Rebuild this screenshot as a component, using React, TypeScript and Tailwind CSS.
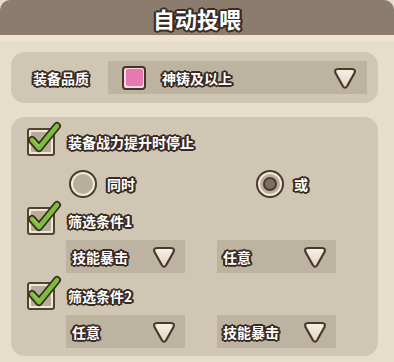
import React from 'react';

const outline =
  "text-white font-bold [font-family:'Noto_Sans_CJK_SC',sans-serif] [text-shadow:-2px_0_0_#3b2a21,2px_0_0_#3b2a21,0_-2px_0_#3b2a21,0_2px_0_#3b2a21,-1px_-1px_0_#3b2a21,1px_-1px_0_#3b2a21,-1px_1px_0_#3b2a21,1px_1px_0_#3b2a21,-2px_-1px_0_#3b2a21,2px_1px_0_#3b2a21,-2px_1px_0_#3b2a21,2px_-1px_0_#3b2a21]";

const Triangle = () => (
  <svg width="24" height="24" viewBox="0 0 24 24">
    <defs>
      <linearGradient id="tri" x1="0" y1="0" x2="0" y2="1">
        <stop offset="0" stopColor="#f7f1e8" />
        <stop offset="1" stopColor="#e0d5c4" />
      </linearGradient>
    </defs>
    <path
      d="M5 3 L19 3 Q23 3 21.5 7 L14.2 20 Q12 23.5 9.8 20 L2.5 7 Q1 3 5 3 Z"
      fill="url(#tri)"
      stroke="#4a382b"
      strokeWidth="2.2"
      strokeLinejoin="round"
    />
  </svg>
);

const Checkbox = () => (
  <div className="relative w-[28px] h-[28px] shrink-0">
    <div className="w-[28px] h-[28px] rounded-[3px] border-2 border-[#54412f] bg-[#efe7d8] p-[2px]">
      <div className="w-full h-full bg-[#b7ad9b] rounded-[1px]" />
    </div>
    <svg className="absolute -left-[1px] -top-[8px]" width="36" height="36" viewBox="0 0 36 36">
      <path d="M6 20 L13 28 L31 6" fill="none" stroke="#3d2c20" strokeWidth="8" strokeLinecap="round" strokeLinejoin="round" />
      <path d="M6 20 L13 28 L31 6" fill="none" stroke="#7cbd3c" strokeWidth="4.5" strokeLinecap="round" strokeLinejoin="round" />
      <path d="M8 20.5 L13 26" fill="none" stroke="#9ed25a" strokeWidth="1.2" strokeLinecap="round" />
    </svg>
  </div>
);

const Radio = ({ checked }: { checked?: boolean }) => (
  <div className="w-[28px] h-[28px] rounded-full border-2 border-[#4c3a2c] bg-[#f1eadc] p-[2px] shrink-0">
    <div className="w-full h-full rounded-full bg-[#b9af9d] flex items-center justify-center">
      {checked && (
        <div className="w-[14px] h-[14px] rounded-full border-2 border-[#4c3a2c] bg-[#7c7066]" />
      )}
    </div>
  </div>
);

const Dropdown = ({ label }: { label: string }) => (
  <div className="w-[119px] h-[33px] bg-[#bdb3a1] flex items-center justify-between pl-[6px] pr-[9px]">
    <span className={`${outline} text-[14px] leading-none`}>{label}</span>
    <Triangle />
  </div>
);

const CheckRow = ({ label }: { label: string }) => (
  <div className="flex items-center h-[28px] pl-[16px]">
    <Checkbox />
    <span className={`${outline} text-[14px] leading-none ml-[13px]`}>{label}</span>
  </div>
);

export default function App() {
  return (
    <div className="w-[394px] h-[362px] bg-[#e6ddca] overflow-hidden flex flex-col">
      <div className="h-[35px] bg-[#8b7c6d] rounded-t-[10px] flex items-center justify-center shrink-0">
        <span className={`${outline} text-[22px] leading-none`}>自动投喂</span>
      </div>
      <div className="h-[6px] bg-[#ede4d2] shrink-0" />

      <div className="ml-[11px] mr-[16px] mt-[11px] h-[51px] bg-[#cfc6b4] rounded-[14px] flex items-center pl-[22px] pr-[11px]">
        <span className={`${outline} text-[14px] leading-none`}>装备品质</span>
        <div className="ml-[19px] flex-1 h-[33px] bg-[#bdb3a1] flex items-center pl-[14px] pr-[10px]">
          <div className="w-[24px] h-[24px] rounded-[4px] border-2 border-[#4a3328] bg-[#f4dce6] p-[1.5px]">
            <div className="w-full h-full rounded-[2px] bg-[#e878b0]" />
          </div>
          <span className={`${outline} text-[14px] leading-none ml-[16px]`}>神铸及以上</span>
          <div className="ml-auto">
            <Triangle />
          </div>
        </div>
      </div>

      <div className="ml-[11px] mr-[16px] mt-[14px] h-[239px] bg-[#cfc6b4] rounded-[14px] pt-[11px] flex flex-col">
        <CheckRow label="装备战力提升时停止" />
        <div className="flex items-center h-[28px] mt-[14px] pl-[58px]">
          <Radio />
          <span className={`${outline} text-[14px] leading-none ml-[10px]`}>同时</span>
          <div className="ml-[121px] flex items-center">
            <Radio checked />
            <span className={`${outline} text-[14px] leading-none ml-[10px]`}>或</span>
          </div>
        </div>
        <div className="mt-[9px]">
          <CheckRow label="筛选条件1" />
        </div>
        <div className="flex gap-[32px] pl-[55px] mt-[5px]">
          <Dropdown label="技能暴击" />
          <Dropdown label="任意" />
        </div>
        <div className="mt-[9px]">
          <CheckRow label="筛选条件2" />
        </div>
        <div className="flex gap-[32px] pl-[55px] mt-[5px]">
          <Dropdown label="任意" />
          <Dropdown label="技能暴击" />
        </div>
      </div>
    </div>
  );
}
